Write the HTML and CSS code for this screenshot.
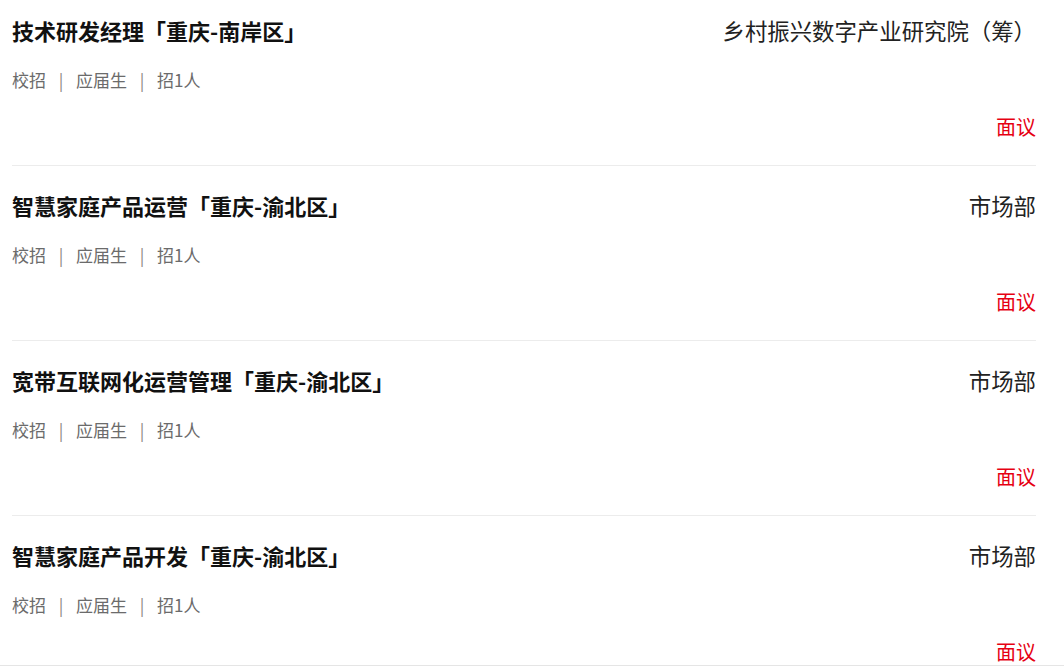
FILE: index.html
```html
<!DOCTYPE html>
<html lang="zh-CN">
<head>
  <meta charset="UTF-8">
  <meta name="viewport" content="width=device-width, initial-scale=1.0">
  <title>职位列表</title>
  <link rel="stylesheet" href="styles.css">
</head>
<body>
  <div class="page">
    <ul class="job-list">
      <li class="job">
        <div class="job-head">
          <span class="job-title">技术研发经理「重庆-南岸区」</span>
          <span class="job-dept">乡村振兴数字产业研究院（筹）</span>
        </div>
        <div class="job-meta">
          <span>校招</span><span class="sep">|</span><span>应届生</span><span class="sep">|</span><span>招1人</span>
        </div>
        <div class="job-salary">面议</div>
      </li>
      <li class="job">
        <div class="job-head">
          <span class="job-title">智慧家庭产品运营「重庆-渝北区」</span>
          <span class="job-dept">市场部</span>
        </div>
        <div class="job-meta">
          <span>校招</span><span class="sep">|</span><span>应届生</span><span class="sep">|</span><span>招1人</span>
        </div>
        <div class="job-salary">面议</div>
      </li>
      <li class="job">
        <div class="job-head">
          <span class="job-title">宽带互联网化运营管理「重庆-渝北区」</span>
          <span class="job-dept">市场部</span>
        </div>
        <div class="job-meta">
          <span>校招</span><span class="sep">|</span><span>应届生</span><span class="sep">|</span><span>招1人</span>
        </div>
        <div class="job-salary">面议</div>
      </li>
      <li class="job">
        <div class="job-head">
          <span class="job-title">智慧家庭产品开发「重庆-渝北区」</span>
          <span class="job-dept">市场部</span>
        </div>
        <div class="job-meta">
          <span>校招</span><span class="sep">|</span><span>应届生</span><span class="sep">|</span><span>招1人</span>
        </div>
        <div class="job-salary">面议</div>
      </li>
    </ul>
  </div>
</body>
</html>
```

FILE: styles.css
```css
/* Base */
body {
  margin: 0;
  background: #fff;
  font-family: "Noto Sans CJK SC", "Noto Sans", sans-serif;
  color: #333;
}

/* Visible area, with the bottom rule */
.page {
  height: 665px;
  overflow: hidden;
  border-bottom: 1px solid #e5e5e5;
}

/* Job list (scrolled a few px) */
.job-list {
  list-style: none;
  margin: -9px 0 0;
  padding: 0 28px 0 12px;
}

.job {
  padding: 24px 0 25px;
  border-bottom: 1px solid #ececec;
}

.job-head {
  display: flex;
  justify-content: space-between;
  align-items: center;
  height: 30px;
}

.job-title {
  font-size: 22px;
  line-height: 30px;
  font-weight: 700;
  color: #111;
}

.job-dept {
  font-size: 22.4px;
  line-height: 30px;
  color: #222;
}

.job-meta {
  display: flex;
  margin-top: 23px;
  font-size: 17px;
  line-height: 24px;
  color: #6b6b6b;
}

.job-meta .sep {
  width: 30px;
  text-align: center;
  color: #8c8580;
}

.job-salary {
  margin-top: 22px;
  text-align: right;
  font-size: 20px;
  line-height: 26px;
  color: #e60012;
}
```
